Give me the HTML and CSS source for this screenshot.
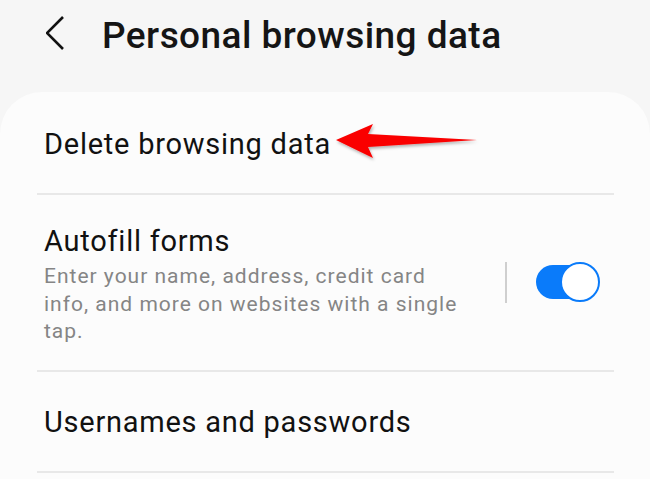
FILE: index.html
```html
<!DOCTYPE html>
<html>
<head>
<meta charset="utf-8">
<link rel="stylesheet" href="styles.css">
</head>
<body>
<header class="top">
  <svg class="back" width="24" height="40" viewBox="0 0 24 40"><polyline points="17,5 1,21 17,37" fill="none" stroke="#111" stroke-width="2.6"/></svg>
  <h1 class="title">Personal browsing data</h1>
</header>
<main class="card">
  <div class="row row-single">
    <span class="label">Delete browsing data</span>
    <svg class="arrow" width="150" height="44" viewBox="0 0 150 44"><defs><filter id="sh" x="-10%" y="-30%" width="120%" height="160%"><feDropShadow dx="1" dy="2" stdDeviation="1.5" flood-color="#000" flood-opacity="0.3"/></filter></defs><polygon points="2,18 39,2 34,12 143,18 34,25 39,36" fill="#fa0000" filter="url(#sh)"/></svg>
  </div>
  <div class="row row-toggle">
    <div class="text">
      <div class="label">Autofill forms</div>
      <div class="desc">Enter your name, address, credit card info, and more on websites with a single tap.</div>
    </div>
    <div class="vsep"></div>
    <div class="switch"><div class="knob"></div></div>
  </div>
  <div class="row row-single">
    <span class="label">Usernames and passwords</span>
  </div>
</main>
</body>
</html>
```
FILE: styles.css
```css
html, body { margin: 0; padding: 0; }
body {
  background: #f6f6f6;
  font-family: Roboto, "Noto Sans", sans-serif;
  color: #111;
  width: 650px;
  height: 479px;
  overflow: hidden;
}
.top {
  height: 92px;
  display: flex;
  align-items: flex-start;
  box-sizing: border-box;
  padding: 12px 0 0 46px;
}
.back { margin-top: 0; flex: none; }
.title {
  margin: 5px 0 0 32px;
  font-size: 37px;
  font-weight: 500;
  line-height: 38px;
  color: #151515;
  letter-spacing: 0.45px;
}
.card {
  background: #fcfcfc;
  border-radius: 42px 42px 0 0;
  padding: 2px 36px 0 37px;
  min-height: 400px;
}
.row {
  border-bottom: 2px solid #e8e8e8;
  padding: 0 7px;
  display: flex;
  align-items: center;
}
.row-single { height: 99px; }
.label {
  font-size: 29px;
  line-height: 34px;
  letter-spacing: 0.75px;
  color: #111;
}
.arrow { margin-left: 3px; margin-top: 0; flex: none; }
.row-toggle {
  height: 177px;
  align-items: flex-start;
  padding-top: 29px;
  box-sizing: border-box;
}
.text { width: 425px; }
.desc {
  font-size: 21px;
  line-height: 27.5px;
  letter-spacing: 1px;
  color: #858585;
  margin-top: 5px;
}
.vsep {
  width: 2px;
  height: 41px;
  background: #cfcfcf;
  margin: 38px 0 0 36px;
}
.switch {
  position: relative;
  width: 60px;
  height: 34px;
  border-radius: 17px;
  background: #0a7bfa;
  margin: 41px 0 0 29px;
}
.knob {
  position: absolute;
  right: -4px;
  top: -3px;
  width: 36px;
  height: 36px;
  border-radius: 50%;
  background: #fff;
  border: 2px solid #0a7bfa;
}
```
